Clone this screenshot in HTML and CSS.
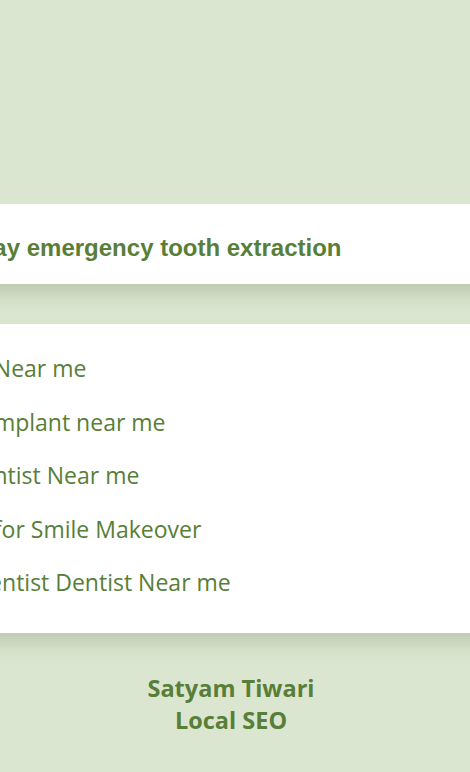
FILE: index.html
```html
<!DOCTYPE html>
<html lang="en">
<head>
    <meta charset="UTF-8">
    <meta name="viewport" content="width=device-width, initial-scale=1.0">
    <title>Dentist Near me | Satyam Tiwari</title>
    <link rel="stylesheet" href="styles.css">
</head>
<body>

    <div class="page">
        <!-- Service mis en avant -->
        <div class="card highlight">
            <h2>Same day emergency tooth extraction</h2>
        </div>

        <!-- Liste des recherches -->
        <div class="card searches">
            <ul>
                <li><a href="#">Dentist Near me</a></li>
                <li><a href="#">Dental Implant near me</a></li>
                <li><a href="#">Best Dentist Near me</a></li>
                <li><a href="#">Dentist for Smile Makeover</a></li>
                <li><a href="#">Local Dentist Dentist Near me</a></li>
            </ul>
        </div>

        <!-- Footer -->
        <footer>
            <p>Satyam Tiwari</p>
            <p>Local SEO</p>
        </footer>
    </div>

</body>
</html>
```

FILE: styles.css
```css
/* Styles généraux */
body {
    margin: 0;
    padding: 0;
    background-color: #dbe6d0;
    overflow: hidden;
    font-family: "Open Sans", "Noto Sans", sans-serif;
    color: #587e37;
}

.page {
    width: 662px;
    margin-left: -100px;
    padding-top: 204px;
}

.card {
    background: #fff;
    box-shadow: 0 14px 22px -8px rgba(60, 80, 40, 0.25);
}

/* Carte du haut */
.highlight {
    height: 80px;
    box-sizing: border-box;
    padding: 30px 8px 22px;
    margin-bottom: 40px;
}

.highlight h2 {
    margin: 0;
    font-family: "Liberation Sans", Arial, sans-serif;
    font-size: 24px;
    line-height: 28px;
    font-weight: bold;
}

/* Liste */
.searches {
    height: 309px;
    box-sizing: border-box;
    padding: 18px 11px 0;
}

.searches ul {
    list-style: none;
    margin: 0;
    padding: 0;
}

.searches li {
    padding: 10px 0;
    font-size: 23px;
    line-height: 33.6px;
}

.searches li a {
    color: #587e37;
    text-decoration: none;
}

/* Footer */
footer {
    text-align: center;
    margin-top: 39px;
    font-weight: bold;
    font-size: 23.5px;
    line-height: 32px;
}

footer p {
    margin: 0;
}
```
